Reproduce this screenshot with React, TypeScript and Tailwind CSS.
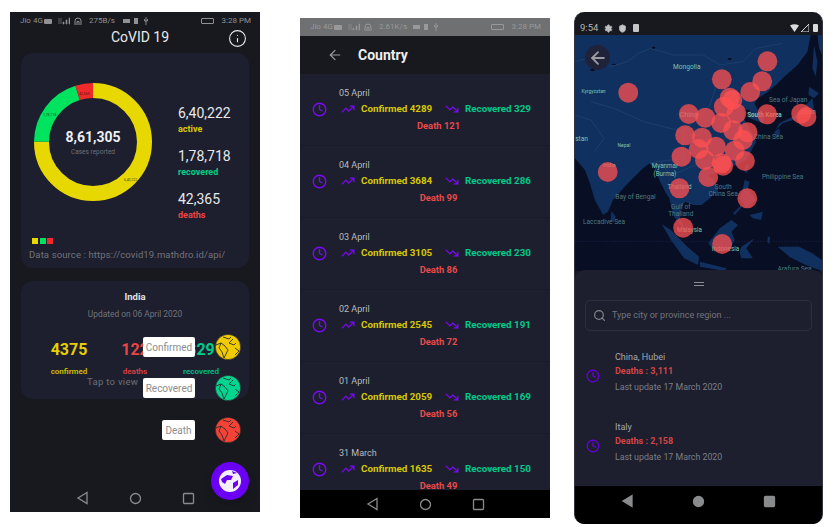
import React from "react";
import { ArrowLeft, Clock, TrendingUp, TrendingDown, Search, Info, Settings, Shield } from "lucide-react";

const sans = { fontFamily: "Roboto, sans-serif" };

function Status({ speed, dim }: { speed: string; dim?: boolean }) {
  return (
    <div className={`h-[18px] shrink-0 flex items-center justify-between pl-[10px] pr-[9px] text-[8px] ${dim ? "bg-[#6f7072] text-[#98999b]" : "text-[#8f9194]"}`}>
      <div className="flex items-center">
        <span className="w-[24px] whitespace-nowrap">Jio 4G</span>
        <span className="w-[8px] h-[5px] bg-current rounded-[1px]" />
        <svg className="ml-[6px]" width="12" height="8" viewBox="0 0 12 8">
          <path d="M1 1v6M3 1v6M5 7h1V5H5zM8 7h1V3H8zM11 7h1V1h-1z" fill="currentColor" stroke="currentColor" strokeWidth="0.6" />
        </svg>
        <svg className="ml-[3px]" width="10" height="9" viewBox="0 0 10 9">
          <path d="M2 8V4a3 3 0 0 1 6 0v4M4 8V4.5h2V8" fill="none" stroke="currentColor" strokeWidth="1" />
        </svg>
        <span className="ml-[6px] w-[34px] whitespace-nowrap">{speed}</span>
        <span className="w-[7px] h-[4px] bg-current" />
        <span className="w-[4px] h-[6px] bg-current ml-[4px]" />
        <svg className="ml-[6px]" width="4" height="8" viewBox="0 0 4 8">
          <path d="M2 0v8M0.5 2v2h3V2" fill="none" stroke="currentColor" strokeWidth="0.9" />
        </svg>
      </div>
      <div className="flex items-center gap-[8px]">
        <span className="w-[13px] h-[6px] border border-current rounded-[1px]" />
        <span className="whitespace-nowrap">3:28 PM</span>
      </div>
    </div>
  );
}

function NavTri({ filled, gap }: { filled?: boolean; gap: string }) {
  return (
    <div className={`flex items-center justify-center ${gap}`}>
      <svg width="13" height="14" viewBox="0 0 13 14">
        <path d="M11 1.5 L2 7 L11 12.5 Z" fill={filled ? "#8a8b8d" : "none"} stroke="#8a8b8d" strokeWidth="1.3" />
      </svg>
      <svg width="13" height="13" viewBox="0 0 13 13">
        <circle cx="6.5" cy="6.5" r="5" fill={filled ? "#8a8b8d" : "none"} stroke="#8a8b8d" strokeWidth="1.3" />
      </svg>
      <svg width="13" height="13" viewBox="0 0 13 13">
        <rect x="1.5" y="1.5" width="10" height="10" rx="1" fill={filled ? "#8a8b8d" : "none"} stroke="#8a8b8d" strokeWidth="1.3" />
      </svg>
    </div>
  );
}

function Globe({ c, size = 26 }: { c: string; size?: number }) {
  return (
    <svg width={size} height={size} viewBox="0 0 26 26">
      <circle cx="13" cy="13" r="12.6" fill={c} stroke="#2a2a2a" strokeWidth="0.6" />
      <path d="M8 3 L14 5 L16 3 M18 5 L14 9 L19 11 L21 9 M1 11 L6 9 L10 12 L13 16 L11 20 L9 24 M6 9 L4 14 L7 18 L9 24 M20 14 L24 17 L20 21" fill="none" stroke="#2c2c2c" strokeWidth="0.9" />
    </svg>
  );
}

function Donut() {
  const r = 51.5;
  const C = 2 * Math.PI * r;
  const seg = (from: number, to: number, color: string) => (
    <circle
      cx="59"
      cy="59"
      r={r}
      fill="none"
      stroke={color}
      strokeWidth="15"
      strokeDasharray={`${(to - from) * C} ${C}`}
      strokeDashoffset={-from * C}
      transform="rotate(-90 59 59)"
    />
  );
  return (
    <div className="relative w-[118px] h-[118px]">
      <svg width="118" height="118">
        {seg(0, 0.75, "#e6d800")}
        {seg(0.75, 0.95, "#00e35f")}
        {seg(0.95, 1, "#ee2a2a")}
        <text x="90" y="98" fontSize="3.5" fill="#4a4a20">6,40,222</text>
        <text x="9" y="33" fontSize="3.5" fill="#0a5a2a">1,78,718</text>
        <text x="45" y="12" fontSize="3.5" fill="#5a1010">42,365</text>
      </svg>
      <div className="absolute inset-0 flex flex-col items-center justify-center pt-[2px]">
        <div className="text-[14px] font-bold text-[#eceef0] leading-[18px]">8,61,305</div>
        <div className="text-[6.5px] text-[#6e7078] mt-[2px]">Cases reported</div>
      </div>
    </div>
  );
}

function Stat({ v, l, c }: { v: string; l: string; c: string }) {
  return (
    <div className="h-[43px]">
      <div className="text-[14px] leading-[20px] text-[#e6e8ea]">{v}</div>
      <div className={`text-[9px] leading-[12px] font-bold ${c}`}>{l}</div>
    </div>
  );
}

function Phone1() {
  return (
    <div className="relative w-[250px] h-[500px] mt-[12px] ml-[10px] bg-[#17191e] flex flex-col shrink-0 overflow-hidden">
      <Status speed="275B/s" />
      <div className="relative h-[23px] shrink-0 pl-[10px] flex items-start justify-center text-[14px] leading-[15px] text-[#e8eaec]">
        <span>CoVID 19</span>
        <Info className="absolute right-[13px] -top-[1px] text-[#e8eaec]" size={19} strokeWidth={1.4} />
      </div>
      <div className="mx-[11px] h-[215px] shrink-0 bg-[#1d1f2e] rounded-[12px] flex flex-col">
        <div className="flex pt-[30px] pl-[13px]">
          <Donut />
          <div className="ml-[26px] pt-[20px]">
            <Stat v="6,40,222" l="active" c="text-[#d9cb00]" />
            <Stat v="1,78,718" l="recovered" c="text-[#00cf85]" />
            <Stat v="42,365" l="deaths" c="text-[#e84545]" />
          </div>
        </div>
        <div className="flex gap-[1.5px] pl-[11px] mt-[6px]">
          <span className="w-[6px] h-[6px] bg-[#e6d800]" />
          <span className="w-[6px] h-[6px] bg-[#00e35f]" />
          <span className="w-[6px] h-[6px] bg-[#ee2a2a]" />
        </div>
        <div className="pl-[8px] mt-[5px] text-[9.5px] leading-[12px] tracking-[0.12px] text-[#71737b]">Data source : https://covid19.mathdro.id/api/</div>
      </div>
      <div className="relative mx-[11px] mt-[13px] h-[118px] shrink-0 bg-[#1d1f2e] rounded-[12px] flex flex-col items-center">
        <div className="mt-[10px] text-[9.5px] font-bold leading-[12px] text-[#e0e2e4]">India</div>
        <div className="mt-[6px] text-[8.4px] leading-[11px] text-[#71737b]">Updated on 06 April 2020</div>
        <div className="grid grid-cols-3 w-full mt-[19px] px-[15px] text-center">
          <div>
            <div className="text-[16px] font-bold leading-[22px] text-[#e6cf00]">4375</div>
            <div className="text-[8px] font-bold mt-[6px] leading-[10px] text-[#c9b800]">confirmed</div>
          </div>
          <div>
            <div className="text-[16px] font-bold leading-[22px] text-[#e84545]">122</div>
            <div className="text-[8px] font-bold mt-[6px] leading-[10px] text-[#d24040]">deaths</div>
          </div>
          <div>
            <div className="text-[16px] font-bold leading-[22px] text-[#00c98a]">329</div>
            <div className="text-[8px] font-bold mt-[6px] leading-[10px] text-[#00b87e]">recovered</div>
          </div>
        </div>
      </div>
      <div className="mt-auto h-[34px] flex items-center justify-center pt-[6px]">
        <NavTri gap="gap-[40px]" />
      </div>

      <div className="absolute left-[77px] top-[363px] text-[9.5px] tracking-[0.3px] text-[#6d6f77]">Tap to view</div>
      {[
        ["Confirmed", "#f0cb00", 322, 52],
        ["Recovered", "#00d68f", 363, 52],
        ["Death", "#f44336", 405, 33],
      ].map(([t, c, top, w]) => (
        <div key={t as string} className="absolute right-[19px] flex items-center gap-[20px]" style={{ top: top as number }}>
          <div className="h-[20px] bg-white rounded-[2px] text-[#8c8c8c] text-[10px] flex items-center justify-center" style={{ width: w as number }}>{t}</div>
          <Globe c={c as string} />
        </div>
      ))}
      <div className="absolute right-[11px] bottom-[12px] w-[38px] h-[38px] rounded-full bg-[#6a00f4] shadow-lg flex items-center justify-center">
        <svg width="24" height="24" viewBox="0 0 24 24">
          <circle cx="12" cy="12" r="11" fill="#f3f0fb" />
          <path d="M3 10 L9 6 L15 7 L13 11 L9 11 L7 15 L4 13 Z M15 14 L20 11 L20 16 L15 20 Z M14 2 L19 4 L15 5 Z" fill="#6a00f4" />
        </svg>
      </div>
    </div>
  );
}

function Row({ date, conf, rec, death }: { date: string; conf: number; rec: number; death: number }) {
  return (
    <div className="h-[72px] shrink-0 border-b border-[#191b28] bg-[#1d1f2e] relative pt-[12px] pl-[39px]">
      <div className="text-[9px] leading-[14px] text-[#b9bbbf]">{date}</div>
      <Clock className="absolute left-[12px] top-[28px] text-[#7a0cf0]" size={15} strokeWidth={2.2} />
      <div className="flex items-center mt-[1px] text-[9.8px] font-bold leading-[16px]">
        <TrendingUp className="text-[#7a0cf0] ml-[2px]" size={14} strokeWidth={2.2} />
        <span className="ml-[6px] w-[70px] text-[#d8c800] whitespace-nowrap">Confirmed {conf}</span>
        <TrendingDown className="text-[#7a0cf0] ml-[14px]" size={14} strokeWidth={2.2} />
        <span className="ml-[6px] text-[#00c98a] whitespace-nowrap">Recovered {rec}</span>
      </div>
      <div className="text-center -ml-[12px] pt-[1px] text-[9.4px] font-bold leading-[16px] text-[#e84a4a]">Death {death}</div>
    </div>
  );
}

function Phone2() {
  const rows = [
    ["05 April", 4289, 329, 121],
    ["04 April", 3684, 286, 99],
    ["03 April", 3105, 230, 86],
    ["02 April", 2545, 191, 72],
    ["01 April", 2059, 169, 56],
    ["31 March", 1635, 150, 49],
  ] as const;
  return (
    <div className="w-[250px] h-[500px] mt-[18px] ml-[40px] bg-[#1d1f2e] flex flex-col shrink-0 overflow-hidden">
      <Status speed="2.61K/s" dim />
      <div className="h-[38px] shrink-0 bg-[#17191e] flex items-center text-[#eceef0]">
        <ArrowLeft className="ml-[27px] text-[#9a9b9e]" size={16} strokeWidth={1.8} />
        <span className="ml-[15px] text-[14px] font-bold">Country</span>
      </div>
      <div className="flex-1 min-h-0 overflow-hidden">
        {rows.map((r) => (
          <Row key={r[0]} date={r[0]} conf={r[1]} rec={r[2]} death={r[3]} />
        ))}
      </div>
      <div className="h-[28px] shrink-0 bg-black flex items-center justify-center">
        <NavTri gap="gap-[40px]" />
      </div>
    </div>
  );
}

const circles = [
  [594, 169], [578, 229], [542, 261], [456, 223], [173, 263], [480, 278], [488, 285], [462, 305], [500, 325], [356, 327],
  [406, 338], [593, 328], [696, 326], [712, 336], [454, 354], [345, 391], [396, 398], [490, 376], [534, 382], [520, 405],
  [438, 425], [386, 432], [495, 437], [334, 455], [405, 465], [455, 475], [460, 482], [526, 468], [415, 516], [111, 501],
  [328, 550], [533, 580], [339, 668], [457, 717],
];

function MapArt() {
  const land = "#10305f";
  const label = "#7fc4b0";
  const sea = "#4d7a80";
  return (
    <svg className="w-full h-full block" viewBox="12 90 747 708" preserveAspectRatio="none">
      <rect x="12" y="90" width="747" height="708" fill="#080e24" />
      <path fill={land} d="M12 90 L725 90 L715 140 L685 180 L645 215 L620 240 L590 265 L565 280 L555 295 L565 315 L585 335 L580 355 L540 340 L540 315 L522 312 L525 345 L548 385 L560 410 L530 465 L480 490 L435 505 L415 512 L430 520 L445 555 L420 580 L395 600 L370 600 L345 590 L335 605 L330 640 L357 700 L342 675 L312 635 L302 600 L297 580 L287 565 L267 525 L252 490 L237 475 L212 495 L172 535 L127 585 L112 620 L97 630 L72 585 L57 535 L42 495 L12 460 Z" />
      <path fill={land} d="M735 120 L745 170 L740 215 L730 190 Z" />
      <path fill={land} d="M720 245 L750 265 L735 280 L718 270 Z" />
      <path fill={land} d="M730 280 L735 310 L690 340 L640 355 L618 375 L630 355 L680 330 L715 295 Z" />
      <path fill={land} d="M615 380 L630 370 L632 390 L618 395 Z" />
      <path fill={land} d="M745 90 L759 90 L759 150 L750 130 Z" />
      <path fill={land} d="M528 480 L538 478 L532 505 L524 498 Z" />
      <path fill={land} d="M122 618 L135 635 L130 652 L120 645 Z" />
      <path fill={land} d="M274 657 L302 675 L352 725 L387 755 L384 780 L342 760 L302 705 Z" />
      <path fill={land} d="M430 695 L450 670 L485 645 L505 660 L485 680 L495 705 L480 735 L435 740 L415 715 Z" />
      <path fill={land} d="M390 770 L470 790 L465 798 L390 785 Z" />
      <path fill={land} d="M525 525 L540 530 L535 550 L560 585 L530 610 L510 580 L520 550 Z" />
      <path fill={land} d="M540 630 L580 620 L575 645 L550 640 Z" />
      <path fill={land} d="M490 625 L515 600 L518 604 L495 630 Z" />
      <path fill={land} d="M515 725 L555 700 L530 730 L550 760 L515 760 L510 740 Z" />
      <path fill={land} d="M625 725 L690 725 L730 745 L759 765 L759 798 L710 780 L660 755 Z" />
      <path fill={land} d="M595 695 L602 695 L600 718 L594 712 Z" />
      <g fill="none" stroke="#2a4e80" strokeWidth="1.5">
        <path d="M12 170 L70 155 L120 185 L170 170 L205 145 L240 130 L310 150 L400 150 L450 180 L520 170 L560 130 L640 115" />
        <path d="M60 290 L130 310 L220 350 L340 380 L340 460 L260 470 L237 475" />
        <path d="M340 380 L420 300 L440 240 L520 270" />
        <path d="M270 470 L300 510 L330 500 L400 470" />
        <path d="M12 330 L60 345 L100 400 L70 440" />
      </g>
      <g fill="#060a1c">
        <ellipse cx="250" cy="128" rx="5" ry="3" />
        <ellipse cx="65" cy="195" rx="7" ry="3" />
        <ellipse cx="130" cy="178" rx="6" ry="2" />
        <ellipse cx="480" cy="162" rx="6" ry="3" />
      </g>
      <line x1="12" y1="709" x2="759" y2="709" stroke="#2a2f55" strokeWidth="1.5" strokeDasharray="4 4" />
      <g fontFamily="Roboto, sans-serif" fontSize="20" textAnchor="middle">
        <text x="350" y="193" fill={label} fontSize="20">Mongolia</text>
        <text x="68" y="265" fill={label} fontSize="15">Kyrgyzstan</text>
        <text x="32" y="407" fill={label} fontSize="20">stan</text>
        <text x="160" y="425" fill={label} fontSize="15">Nepal</text>
        <text x="356" y="336" fill={label} fontSize="22">China</text>
        <text x="116" y="486" fill={label} fontSize="18">India</text>
        <text x="284" y="490" fill={label} fontSize="19">Myanmar</text>
        <text x="284" y="513" fill={label} fontSize="19">(Burma)</text>
        <text x="328" y="552" fill={label} fontSize="19">Thailand</text>
        <text x="585" y="336" fill={label} fontSize="19" fontWeight="700">South Korea</text>
        <text x="714" y="326" fill={label} fontSize="19">Japan</text>
        <text x="657" y="291" fill={sea}>Sea of Japan</text>
        <text x="597" y="402" fill={sea}>China Sea</text>
        <text x="640" y="522" fill={sea}>Philippine Sea</text>
        <text x="460" y="553" fill={sea}>South</text>
        <text x="460" y="573" fill={sea}>China Sea</text>
        <text x="195" y="583" fill={sea}>Bay of Bengal</text>
        <text x="332" y="611" fill={sea}>Gulf of</text>
        <text x="332" y="632" fill={sea}>Thailand</text>
        <text x="100" y="656" fill={sea}>Laccadive Sea</text>
        <text x="358" y="680" fill={label} fontSize="19">Malaysia</text>
        <text x="467" y="737" fill={label} fontSize="19">Indonesia</text>
        <text x="676" y="798" fill={sea}>Arafura Sea</text>
      </g>
      <g fill="#ff5050" fillOpacity="0.75">
        {circles.map(([x, y], i) => (
          <circle key={i} cx={x} cy={y} r="30" />
        ))}
      </g>
    </svg>
  );
}

function Place({ name, deaths }: { name: string; deaths: string }) {
  return (
    <div className="relative h-[70px] pl-[40px]">
      <Clock className="absolute left-[11px] top-[19px] text-[#6a00e0]" size={14} strokeWidth={2.2} />
      <div className="text-[9px] leading-[13px] text-[#a6a8ad] pt-[1px]">{name}</div>
      <div className="text-[9px] font-bold leading-[13px] text-[#d34545] mt-[1px]">Deaths : {deaths}</div>
      <div className="text-[8.8px] leading-[13px] text-[#7c7e86] mt-[3px]">Last update 17 March 2020</div>
    </div>
  );
}

function Phone3() {
  return (
    <div className="w-[249px] h-[512px] mt-[12px] ml-[24px] rounded-[10px] border-x border-[#33343c] bg-[#17191e] flex flex-col shrink-0 overflow-hidden">
      <div className="h-[23px] shrink-0 pt-[9px] flex items-center justify-between pl-[5px] pr-[4px] text-[9.5px] text-[#b5b6b8]">
        <div className="flex items-center">
          <span className="w-[24px]">9:54</span>
          <Settings size={9} fill="#c4c5c7" strokeWidth={2} />
          <Shield className="ml-[5px]" size={9} fill="#c4c5c7" strokeWidth={2} />
          <span className="ml-[6px] w-[6px] h-[8px] bg-[#c4c5c7] rounded-[1px]" />
        </div>
        <div className="flex items-center gap-[2px]">
          <svg width="9" height="8" viewBox="0 0 9 8"><path d="M0 1.5 Q4.5 -1 9 1.5 L4.5 8 Z" fill="#dcdcdc" /></svg>
          <svg width="8" height="8" viewBox="0 0 8 8"><path d="M8 0 V8 H0 Z" fill="none" stroke="#dcdcdc" strokeWidth="1" /></svg>
          <span className="ml-[2px] w-[5px] h-[8px] bg-[#dcdcdc] rounded-[1px]" />
        </div>
      </div>
      <div className="relative h-[236px] shrink-0">
        <MapArt />
        <div className="absolute left-[10px] top-[10px] w-[25px] h-[25px] rounded-full bg-[#20223a] flex items-center justify-center">
          <ArrowLeft className="text-[#9a9ca0]" size={20} strokeWidth={2.2} />
        </div>
      </div>
      <div className="flex-1 min-h-0 -mt-[1px] rounded-t-[9px] bg-[#1d1f2e] flex flex-col relative">
        <div className="flex flex-col gap-[1.5px] items-center pt-[12px]">
          <span className="w-[10px] h-[1px] bg-[#8b8d92]" />
          <span className="w-[10px] h-[1px] bg-[#8b8d92]" />
        </div>
        <div className="mx-[10px] mt-[14.5px] h-[31px] shrink-0 rounded-[5px] border border-[#2d2f40] flex items-center pl-[7px] text-[9px] text-[#73757d]">
          <Search size={13} className="text-[#85878d]" strokeWidth={2.2} />
          <span className="ml-[6px]">Type city or province region ...</span>
        </div>
        <div className="mt-[18.5px]">
          <Place name="China, Hubei" deaths="3,111" />
          <Place name="Italy" deaths="2,158" />
        </div>
      </div>
      <div className="h-[38px] shrink-0 bg-black flex items-center justify-center pb-[8px]">
        <NavTri filled gap="gap-[58px]" />
      </div>
    </div>
  );
}

export default function App() {
  return (
    <div className="w-[835px] h-[527px] bg-white flex items-start overflow-hidden" style={sans}>
      <Phone1 />
      <Phone2 />
      <Phone3 />
    </div>
  );
}
